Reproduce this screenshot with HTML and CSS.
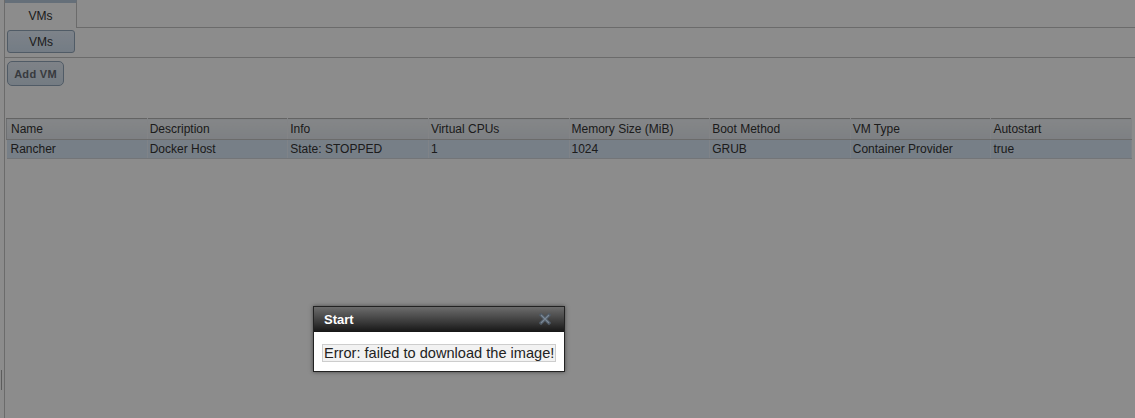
FILE: index.html
```html
<!DOCTYPE html>
<html lang="en">
<head>
    <meta charset="UTF-8">
    <link rel="stylesheet" href="styles.css">
    <title>VMs</title>
</head>
<body>

    <div class="frame">
        <div class="tabs">
            <div class="tab">VMs</div>
        </div>
        <div class="subtabs">
            <button class="btn sub">VMs</button>
        </div>
        <div class="toolbar">
            <button class="btn add">Add VM</button>
        </div>

        <table class="grid">
            <thead>
                <tr>
                    <th>Name</th>
                    <th>Description</th>
                    <th>Info</th>
                    <th>Virtual CPUs</th>
                    <th>Memory Size (MiB)</th>
                    <th>Boot Method</th>
                    <th>VM Type</th>
                    <th>Autostart</th>
                </tr>
            </thead>
            <tbody>
                <tr class="selected">
                    <td>Rancher</td>
                    <td>Docker Host</td>
                    <td>State: STOPPED</td>
                    <td>1</td>
                    <td>1024</td>
                    <td>GRUB</td>
                    <td>Container Provider</td>
                    <td>true</td>
                </tr>
            </tbody>
        </table>
    </div>

    <div class="splitter"></div>

    <!-- modal dims the whole page -->
    <div class="overlay"></div>

    <div class="dialog">
        <div class="dialog-title">
            <span>Start</span>
            <svg class="close" width="12" height="12" viewBox="0 0 12 12">
                <path d="M2 2 L10 10 M10 2 L2 10" stroke="#4f5a66" stroke-width="3.2" stroke-linecap="square"/>
                <path d="M2 2 L10 10 M10 2 L2 10" stroke="#7b8896" stroke-width="1.2"/>
            </svg>
        </div>
        <div class="dialog-body">
            <span class="message">Error: failed to download the image!</span>
        </div>
    </div>

</body>
</html>
```

FILE: styles.css
```css
html, body {
    margin: 0;
    height: 100%;
    overflow: hidden;
}

body {
    font-family: "Liberation Sans", Arial, sans-serif;
    font-size: 12px;
    color: #333;
    background-color: #fff;
}

.frame {
    margin-left: 4px;
    height: 100%;
    border-left: 1px solid #c4c4c4;
}

/* top tab strip */
.tabs {
    display: flex;
    height: 27px;
    border-bottom: 1px solid #c4c4c4;
}

.tab {
    width: 71px;
    margin-bottom: -1px;
    border-top: 3px solid #b9cadc;
    border-right: 1px solid #c4c4c4;
    background-color: #fff;
    display: flex;
    align-items: center;
    justify-content: center;
    padding-top: 1px;
    font-size: 12px;
}

.subtabs {
    padding: 2px 2px 4px;
    border-bottom: 1px solid #c4c4c4;
}

.toolbar {
    height: 57px;
    padding: 3px 2px 0;
}

.btn {
    font-family: inherit;
    font-size: 12px;
    color: #333;
    border: 1px solid #93a6ba;
    cursor: pointer;
    padding: 0;
}

.sub {
    width: 68px;
    height: 23px;
    border-radius: 3px;
    background: linear-gradient(#e4eefa, #d3e2f2);
}

.add {
    width: 57px;
    height: 25px;
    border-radius: 5px;
    font-size: 11px;
    font-weight: bold;
    letter-spacing: 0.3px;
    color: #666b72;
    background: linear-gradient(#e6eef7, #d4e1ee);
}

/* VM list */
.grid {
    margin-left: 1px;
    width: 1126px;
    border-collapse: collapse;
    table-layout: fixed;
    border-right: 1px solid #c0c0c0;
}

.grid th,
.grid td {
    text-align: left;
    font-weight: normal;
    padding: 0 3px 0 2px;
    white-space: nowrap;
}

.grid th:first-child,
.grid td:first-child {
    padding-left: 4px;
}

.grid th {
    height: 20px;
    background: linear-gradient(#f2f5f8, #e4e9ef);
    border-top: 1px solid #b4b4b4;
    border-bottom: 1px solid #c3c3c3;
    border-right: 1px solid #eef1f4;
    border-left: 1px solid #c8ccd0;
}

.grid td {
    height: 18px;
    background-color: #d9e7f6;
    border-bottom: 1px solid #d2d6da;
    border-right: 1px solid #e8eff8;
}

.splitter {
    position: absolute;
    left: 1px;
    top: 370px;
    width: 1px;
    height: 20px;
    background-color: #a8a8a8;
}

.overlay {
    position: fixed;
    inset: 0;
    background-color: rgba(0, 0, 0, 0.45);
}

/* modal dialog */
.dialog {
    position: absolute;
    left: 313px;
    top: 306px;
    width: 250px;
    border: 1px solid #222;
    background-color: #fff;
    box-shadow: 0 0 4px rgba(0, 0, 0, 0.5);
}

.dialog-title {
    height: 25px;
    display: flex;
    align-items: center;
    justify-content: space-between;
    padding: 0 13px 0 10px;
    background: linear-gradient(#6c6c6c, #3a3a3a 60%, #161616);
    color: #fff;
    font-size: 13px;
    font-weight: bold;
}

.close {
    margin-top: -2px;
}

.dialog-body {
    padding: 12px 8px 9px;
}

.message {
    display: inline-block;
    line-height: 16px;
    padding: 0 1px;
    font-size: 14.6px;
    color: #222;
    background-color: #f2f2f2;
    border: 1px solid #cdcdcd;
    white-space: nowrap;
}
```
